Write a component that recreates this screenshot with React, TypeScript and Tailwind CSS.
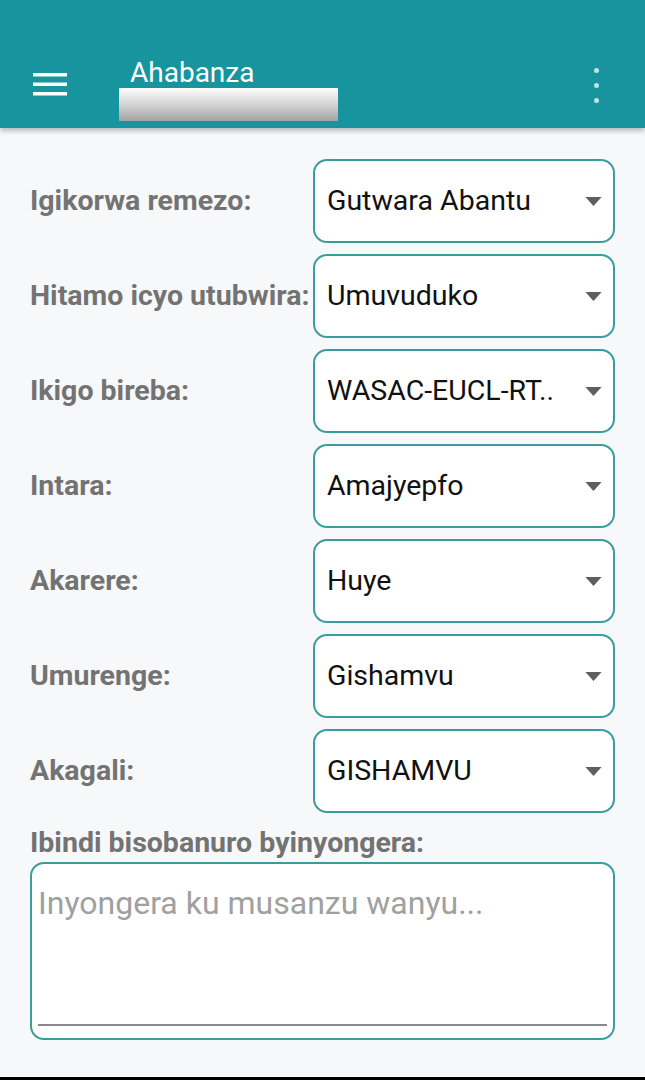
import React from "react";

const fields: { label: string; value: string }[] = [
  { label: "Igikorwa remezo:", value: "Gutwara Abantu" },
  { label: "Hitamo icyo utubwira:", value: "Umuvuduko" },
  { label: "Ikigo bireba:", value: "WASAC-EUCL-RT.." },
  { label: "Intara:", value: "Amajyepfo" },
  { label: "Akarere:", value: "Huye" },
  { label: "Umurenge:", value: "Gishamvu" },
  { label: "Akagali:", value: "GISHAMVU" },
];

function Caret() {
  return (
    <svg viewBox="0 0 20 10" className="h-[9px] w-[19px] shrink-0 text-[#5f5f5f]" aria-hidden>
      <path d="M1 0h18l-9 10z" fill="currentColor" />
    </svg>
  );
}

function SelectRow({ label, value }: { label: string; value: string }) {
  return (
    <div className="flex h-[84px] items-center">
      <span className="w-[283px] shrink-0 whitespace-nowrap text-[28.5px] font-bold text-[#737373]">
        {label}
      </span>
      <div className="flex h-full flex-1 items-center justify-between rounded-[14px] border-2 border-[#3a9c9f] bg-white pl-[12px] pr-[10px]">
        <span className="text-[28.5px] text-[#111]">{value}</span>
        <Caret />
      </div>
    </div>
  );
}

export default function App() {
  return (
    <div className="flex h-[1080px] w-[645px] flex-col bg-[#f7f8f9] font-['Roboto',sans-serif]">
      <header className="relative z-10 flex h-[128px] shrink-0 items-end bg-[#17949e] pb-[7px] shadow-[0_3px_5px_rgba(0,0,0,0.25)]">
        <div className="flex w-full items-center pl-[33px] pr-[46px]">
          <svg viewBox="0 0 34 24" className="mb-[12px] h-[24px] w-[34px] text-white" aria-hidden>
            <rect x="0" y="1" width="34" height="3.5" fill="currentColor" />
            <rect x="0" y="10.5" width="34" height="3.5" fill="currentColor" />
            <rect x="0" y="20" width="34" height="3.5" fill="currentColor" />
          </svg>
          <div className="ml-[52px] flex flex-col">
            <span className="pl-[11px] text-[28px] leading-[30px] text-white">Ahabanza</span>
            <div className="h-[33px] w-[219px] bg-gradient-to-b from-[#fdfdfd] via-[#d4d4d4] to-[#a3a3a3]" />
          </div>
          <div className="ml-auto flex flex-col gap-[10px] pb-[8px]">
            <span className="h-[5px] w-[5px] rounded-full bg-[#bfe3e6]" />
            <span className="h-[5px] w-[5px] rounded-full bg-[#bfe3e6]" />
            <span className="h-[5px] w-[5px] rounded-full bg-[#bfe3e6]" />
          </div>
        </div>
      </header>

      <main className="flex flex-1 flex-col px-[30px] pt-[31px]">
        <div className="flex flex-col gap-[11px]">
          {fields.map((f) => (
            <SelectRow key={f.label} label={f.label} value={f.value} />
          ))}
        </div>

        <span className="mt-[14px] text-[28.5px] font-bold leading-[32px] text-[#737373]">
          Ibindi bisobanuro byinyongera:
        </span>
        <div className="mt-[3px] flex h-[178px] flex-col rounded-[14px] border-2 border-[#3a9c9f] bg-white px-[6px] pb-[12px] pt-[20px]">
          <span className="text-[32px] leading-[38px] text-[#a0a0a0]">
            Inyongera ku musanzu wanyu...
          </span>
          <div className="mt-auto h-[2px] bg-[#8a8a8a]" />
        </div>
      </main>

      <div className="h-[3px] shrink-0 bg-black" />
    </div>
  );
}
